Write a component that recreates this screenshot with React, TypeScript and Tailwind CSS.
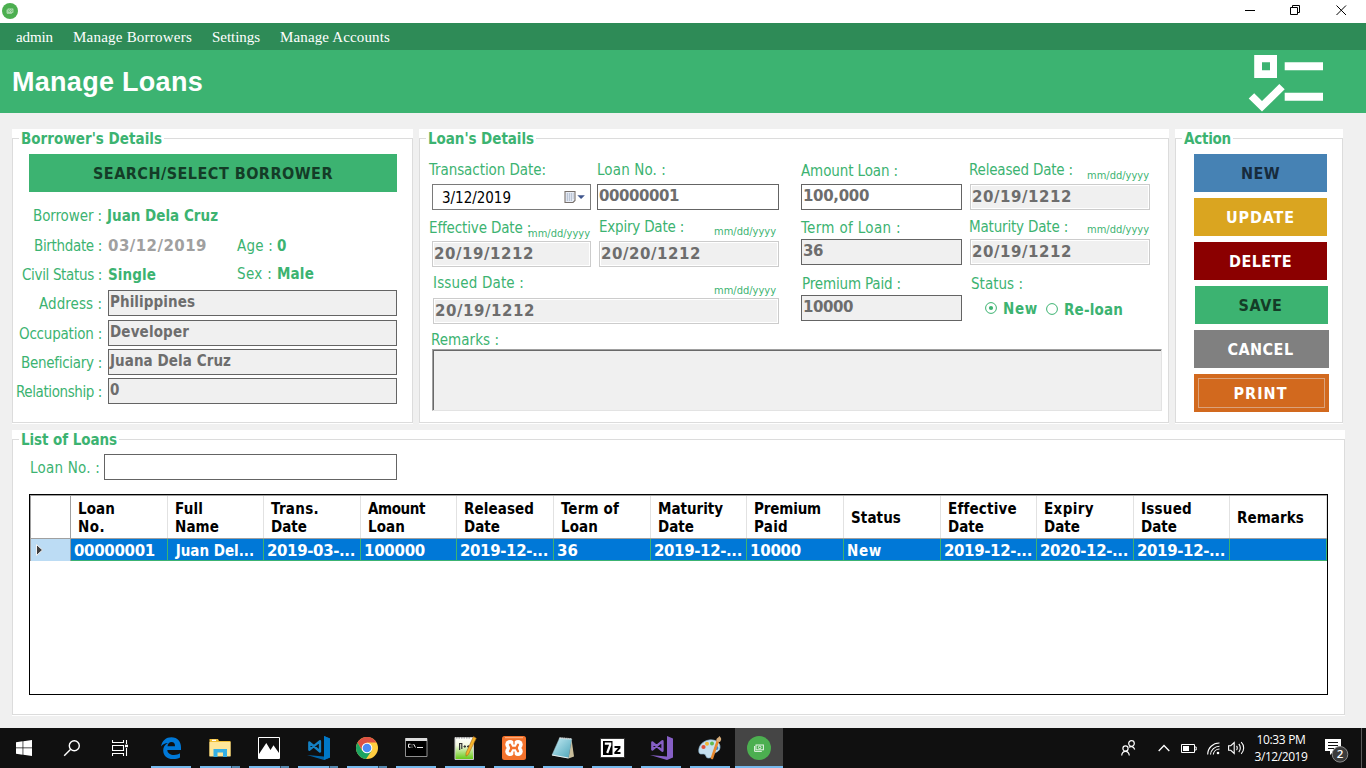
import { useLayoutEffect, useRef, type ReactNode } from "react";

/* Single-line text whose letter spacing is computed so it fills `w` pixels. */
function Fit({ w, box = "w-fit", className = "", children }: { w: number; box?: string; className?: string; children: string }) {
  const ref = useRef<HTMLSpanElement>(null);
  useLayoutEffect(() => {
    const el = ref.current;
    if (!el) return;
    el.style.letterSpacing = "0px";
    const range = document.createRange();
    range.selectNodeContents(el);
    const natural = range.getBoundingClientRect().width;
    el.style.letterSpacing = `${(w + 1 - natural) / children.length}px`;
  }, [w, children]);
  const digits = /^[\d/,.-]{2,}$/.test(children) ? "font-['DejaVu_Sans',sans-serif]" : "";
  return (
    <span ref={ref} className={`block shrink-0 whitespace-pre ${box} ${className}`}>
      <span className={className.includes("plain") ? "" : digits}>{children}</span>
    </span>
  );
}

function Group({ title, tw, className, children }: { title: string; tw: number; className: string; children: ReactNode }) {
  return (
    <section className={`flex shrink-0 flex-col bg-white pt-[9px] pb-px ${className}`}>
      <div className="flex flex-1 flex-col border border-[#dcdcdc]">
        <h2 className="-mt-[9px] ml-[6px] h-[18px] w-fit bg-white pr-[2px] pl-[2px] text-[15px] leading-[19px] font-bold text-[#3cb371]">
          <Fit w={tw}>{title}</Fit>
        </h2>
        {children}
      </div>
    </section>
  );
}

const label = "text-[15px] leading-[20px] text-[#3cb371]";
const strong = "text-[15px] leading-[20px] font-bold text-[#3cb371]";

function Box({ text, w = 0, className = "" }: { text?: string; w?: number; className?: string }) {
  return (
    <div className={`h-[26px] border border-[#646464] pl-px text-[15px] leading-[23px] font-bold text-[#6d6d6d] ${className}`}>
      {text ? <Fit w={w}>{text}</Fit> : null}
    </div>
  );
}

function DateBox({ text, className = "" }: { text: string; className?: string }) {
  return (
    <div className={`h-[26px] border border-[#cccccc] bg-white p-px ${className}`}>
      <div className="h-full bg-[#f0f0f0] text-[15px] leading-[23px] font-bold text-[#6d6d6d]">
        <Fit w={99}>{text}</Fit>
      </div>
    </div>
  );
}

function Caption({ text, w, className, hint }: { text: string; w: number; className: string; hint?: string }) {
  return (
    <div className={`flex items-start justify-between ${className}`}>
      <Fit w={w} box="w-0" className={label}>{text}</Fit>
      {hint ? <Fit w={61} className={`text-[11px] leading-[14px] text-[#3cb371] ${hint}`}>mm/dd/yyyy</Fit> : null}
    </div>
  );
}

function InfoRow({ name, w, className, shift = "", children }: { name: string; w: number; className: string; shift?: string; children: ReactNode }) {
  return (
    <div className={`flex ${className}`}>
      <div className={`flex w-[95px] shrink-0 justify-end pr-[6px] ${shift}`}>
        <Fit w={w} className={label}>{name}</Fit>
      </div>
      {children}
    </div>
  );
}

function CashLogo({ className }: { className: string }) {
  return (
    <svg viewBox="0 0 24 24" className={className}>
      <circle cx="12" cy="12" r="12" fill="#4caf50" />
      <g fill="none" stroke="#e8f5e9" strokeWidth="1">
        <path d="M7.6 10v5.4h7.2" />
        <rect x="9" y="9" width="7.4" height="4.8" />
        <circle cx="12.7" cy="11.4" r="1.3" />
      </g>
    </svg>
  );
}

const columns: [string, number, string, number, string, string, number][] = [
  ["Loan", 36, "No.", 26, "w-[97px]", "00000001", 80],
  ["Full", 27, "Name", 43, "w-[96px]", " Juan Del...", 82],
  ["Trans.", 47, "Date", 35, "w-[97px]", "2019-03-...", 87],
  ["Amount", 56, "Loan", 36, "w-[96px]", "100000", 60],
  ["Released", 69, "Date", 35, "w-[97px]", "2019-12-...", 87],
  ["Term of", 57, "Loan", 36, "w-[97px]", "36", 20],
  ["Maturity", 64, "Date", 35, "w-[96px]", "2019-12-...", 87],
  ["Premium", 66, "Paid", 33, "w-[97px]", "10000", 50],
  ["Status", 49, "", 0, "w-[97px]", "New", 34],
  ["Effective", 67, "Date", 35, "w-[96px]", "2019-12-...", 87],
  ["Expiry", 49, "Date", 35, "w-[97px]", "2020-12-...", 87],
  ["Issued", 50, "Date", 35, "w-[96px]", "2019-12-...", 87],
  ["Remarks", 66, "", 0, "w-[97px]", "", 0],
];

function LoansTable() {
  return (
    <div className="mt-[14px] ml-[16px] h-[201px] w-[1299px] border border-black bg-white">
      <div className="flex h-[44px] border-t border-b border-[#a0a0a0]">
        <div className="w-[41px] shrink-0 border-r border-l border-[#a0a0a0]" />
        {columns.map(([a, aw, b, bw, width], i) => (
          <div key={i} className={`flex shrink-0 flex-col justify-center border-r border-[#e2e2e2] pt-[2px] pl-[7px] text-[15px] leading-[18px] font-bold text-black ${width}`}>
            <Fit w={aw}>{a}</Fit>
            {b ? <Fit w={bw}>{b}</Fit> : null}
          </div>
        ))}
      </div>
      <div className="flex h-[22px]">
        <div className="flex w-[41px] shrink-0 items-center border-r border-l border-[#a0a0a0] bg-[#bcdcf4] pl-[5px]">
          <svg viewBox="0 0 8 12" className="h-[12px] w-[8px]">
            <path d="M0.5 0.5 L6.5 6 L0.5 11.5Z" fill="#404040" stroke="#f4f4f4" strokeWidth="1" />
          </svg>
        </div>
        {columns.map(([, , , , width, text, tw], i) => (
          <div key={i} className={`shrink-0 border-r border-b border-[#3cb371] bg-[#0078d7] pl-[3px] text-[15px] leading-[24px] font-bold text-white ${width}`}>
            {text ? <Fit w={tw}>{text}</Fit> : null}
          </div>
        ))}
      </div>
    </div>
  );
}

function ActionButton({ text, w, className }: { text: string; w: number; className: string }) {
  return (
    <button className={`flex h-[38px] shrink-0 items-center justify-center pt-[2px] text-[16px] leading-[20px] font-bold ${className}`}>
      <Fit w={w}>{text}</Fit>
    </button>
  );
}

function Task({ children, split = false }: { children: ReactNode; split?: boolean }) {
  return (
    <div className="flex h-[40px] w-[49px] shrink-0 flex-col px-[4px] pr-[5px]">
      <div className="flex h-[38px] items-center justify-center pt-[2px]">{children}</div>
      <div className="flex h-[2px] bg-[#76b9ed]">{split ? <div className="ml-auto w-[9px] border-l border-[#2f4a5f] bg-[#5589b0]" /> : null}</div>
    </div>
  );
}

function Taskbar() {
  const ic = "h-[24px] w-[24px]";
  return (
    <footer className="flex h-[40px] w-full shrink-0 bg-[#101010] text-white">
      <div className="flex w-[48px] items-center justify-center">
        <svg viewBox="0 0 16 16" className="h-[16px] w-[16px]" fill="#fff">
          <path d="M0 2.2 6.6 1.3V7.6H0zM7.3 1.2 16 0V7.6H7.3zM0 8.3H6.6V14.7L0 13.8zM7.3 8.3H16V16L7.3 14.8z" />
        </svg>
      </div>
      <div className="flex w-[48px] items-center justify-center">
        <svg viewBox="0 0 18 18" className="h-[18px] w-[18px]" fill="none" stroke="#fff" strokeWidth="1.4">
          <circle cx="11.3" cy="6.7" r="5" />
          <path d="M7.7 10.3 1.2 16.8" />
        </svg>
      </div>
      <div className="flex w-[48px] items-center justify-center">
        <svg viewBox="0 0 17 16" className="h-[16px] w-[17px]" fill="none" stroke="#fff" strokeWidth="1.1">
          <path d="M.5 0V2.5H11.5V0M.5 16V13.5H11.5V16M.5 5.5H11.5V10.5H.5zM14.5 0V4M14.5 8V16" />
          <path d="M13 4.7H16V7.2H13z" fill="#fff" stroke="none" />
        </svg>
      </div>
      <div className="ml-[3px] flex">
        <Task>
          <svg viewBox="0 0 24 24" className={ic}>
            <path d="M2 10.5C3 4.5 7.2 1.2 12.4 1.2 18.8 1.2 22 5.8 22 11.3V14H8.3C8.5 17.5 11.6 19 15 19 17.4 19 19.4 18.3 21 17.3V21.6C19.2 22.6 16.8 23.1 14.1 23.1 8 23.1 4.2 19.6 4.2 14.5 4.2 11.2 6 8.6 9 7.1 6 7.3 3.7 8.5 2 10.5ZM8.5 10.2H16C16 7.4 14.8 6 12.5 6 10.2 6 8.8 7.7 8.5 10.2Z" fill="#0078d7" />
          </svg>
        </Task>
        <Task split>
          <svg viewBox="0 0 24 24" className={ic}>
            <path d="M1.5 3H10l1 2H22.5V20H1.5z" fill="#f0bd35" />
            <path d="M1.5 6H22.5V20.5H1.5z" fill="#ffe699" />
            <path d="M4 3.7H8V5H4z" fill="#fff" />
            <path d="M5.5 21V13H19V21H15V16.5H9.5V21z" fill="#35b0e5" />
          </svg>
        </Task>
        <Task split>
          <svg viewBox="0 0 24 24" className={ic}>
            <path d="M1.5 1.5H22.5V22.5H1.5z" fill="#101010" stroke="#fff" strokeWidth="1" />
            <path d="M2 18 9.3 7 13.5 14 16.5 9.3 22 17V22.5H2z" fill="#fff" />
          </svg>
        </Task>
        <Task split>
          <svg viewBox="0 0 24 24" className={ic}>
            <path d="M18 0 24 2.5V21.5L18 24 1 19 18 20.5z" fill="#0065a9" />
            <path d="M18 0 24 2.5V21.5L18 24z" fill="#0078c8" />
            <path d="M3.3 6.5 14 15.5V5.2L3.3 13.8z" fill="none" stroke="#1481c4" strokeWidth="2.3" strokeLinejoin="round" />
          </svg>
        </Task>
        <Task split>
          <svg viewBox="0 0 24 24" className={ic}>
            <circle cx="12" cy="12" r="11" fill="#ffcd40" />
            <path d="M2.5 6.5A11 11 0 0 1 21.5 6.5H12L7.2 14.5z" fill="#dd5144" />
            <path d="M2.5 6.5A11 11 0 0 0 11 23L16.8 14.6 12 17 7.2 14.7z" fill="#1da462" />
            <circle cx="12" cy="12" r="5.3" fill="#fff" />
            <circle cx="12" cy="12" r="4.3" fill="#4c8bf5" />
          </svg>
        </Task>
        <Task>
          <svg viewBox="0 0 24 24" className={ic}>
            <path d="M1.5 2.5H23V20.5H1.5z" fill="#000" stroke="#8f8f8f" strokeWidth="1" />
            <path d="M1.5 2H23V5H1.5z" fill="#dcdcdc" />
            <path d="M6.5 8.2H4.5V11.3H6.5M8 8.5V9.3M8 10.7V11.5M9.6 8 11.5 11.5M13 11.5H19" fill="none" stroke="#eee" strokeWidth="1" />
          </svg>
        </Task>
        <Task>
          <svg viewBox="0 0 24 24" className={ic}>
            <defs><linearGradient id="npp" x1="0" y1="0" x2="0" y2="1"><stop offset="0" stopColor="#fff" /><stop offset=".35" stopColor="#f4fae0" /><stop offset="1" stopColor="#62c811" /></linearGradient></defs>
            <path d="M2 1.5H20.5V23.5H2z" fill="url(#npp)" stroke="#c8c8c8" />
            <path d="M3 1.8H18" stroke="#999" strokeDasharray="1.5 1" strokeWidth="1.5" />
            <path d="M6.6 14V7.5H8.8V13M10.5 10.5H13M11.8 9.2V11.8M14 10.5H16.5M15.3 9.2V11.8" fill="none" stroke="#333" strokeWidth="1.2" />
            <path d="M20.5 .5 23.3 2.3 15.3 18.5 13 20.2 13 17z" fill="#f6b52b" stroke="#a06218" strokeWidth=".6" />
          </svg>
        </Task>
        <Task>
          <svg viewBox="0 0 24 24" className={ic}>
            <rect x="0" y="0" width="24" height="24" rx="2.5" fill="#f3722c" />
            <path d="M3 1.7H21" stroke="#ffb98c" strokeWidth="1" />
            <g fill="#fff">
              <circle cx="8" cy="8.6" r="4.7" />
              <circle cx="16" cy="8.6" r="4.7" />
              <circle cx="8" cy="15.4" r="4.7" />
              <circle cx="16" cy="15.4" r="4.7" />
              <path d="M9 8.5H15V15.5H9z" />
            </g>
            <path d="M8 8.8 9.3 11.2M16 8.8 14.7 11.2M8 15.2 9.3 12.8M16 15.2 14.7 12.8M9 12H15" stroke="#f3722c" strokeWidth="2.3" strokeLinecap="round" />
            <path d="M12 3V8.6M12 15.4V21" stroke="#f3722c" strokeWidth="1.3" />
          </svg>
        </Task>
        <Task>
          <svg viewBox="0 0 24 24" className={ic}>
            <defs><linearGradient id="pad" x1="0" y1="0" x2="1" y2="1"><stop offset="0" stopColor="#c7edf5" /><stop offset="1" stopColor="#4ba4b9" /></linearGradient></defs>
            <path d="M20.5 3 23 20.5 17.5 22.5z" fill="#c9bd9a" />
            <path d="M8.5 2 20.8 3 17.5 22 1 19z" fill="url(#pad)" stroke="#8aa9b3" strokeWidth=".5" />
            <path d="M8.5 2 20.8 3" stroke="#eee" strokeWidth="1.7" strokeDasharray="1.2 .8" />
            <path d="M1 19 17.5 22" stroke="#e6f0f2" strokeWidth="1.2" />
          </svg>
        </Task>
        <Task>
          <div className="flex h-[18px] w-[23px] items-start justify-center border-[2px] border-white bg-black outline outline-[#333]">
            <svg viewBox="0 0 19 14" className="h-[14px] w-[19px]" fill="none">
              <path d="M9.5 0H19V14H9.5z" fill="#fff" />
              <path d="M1.8 2.7H7.2V4L4.2 12" stroke="#fff" strokeWidth="2.2" />
              <path d="M11.5 6H16.5V7L12.3 11.5V12H17.5" stroke="#000" strokeWidth="1.9" />
            </svg>
          </div>
        </Task>
        <Task>
          <svg viewBox="0 0 24 24" className={ic}>
            <path d="M18 0 24 2.5V21.5L18 24 1 19 18 20.5z" fill="#865fc5" />
            <path d="M3.3 6.5 13.5 14.8V5.2L3.3 13.5z" fill="none" stroke="#865fc5" strokeWidth="2.3" strokeLinejoin="round" />
          </svg>
        </Task>
        <Task>
          <svg viewBox="0 0 24 24" className={ic}>
            <path d="M11 4C17 3 22.5 6.5 22 11.5 21.5 16 17.5 16 15.5 18 14 20 14.5 22 10 22 7.5 22 8.5 18.5 6 18 3.5 17.7 1.2 19 .8 15.5 .3 10 4.5 5 11 4Z" fill="#c6e0f0" stroke="#8eb7d2" strokeWidth=".7" />
            <circle cx="5.5" cy="11" r="2.1" fill="#e2513b" />
            <circle cx="9" cy="7.8" r="2" fill="#f0b835" />
            <circle cx="14" cy="7.5" r="2" fill="#61b94e" />
            <circle cx="18.5" cy="12" r="1.9" fill="#3b86d0" />
            <path d="M20 4.5 14 22" stroke="#e7892f" strokeWidth="2.6" strokeLinecap="round" />
            <path d="M18.7 5.3C17.5 2 20 2.5 21.5 0 22.5 2 24.5 2 22 6z" fill="#d8ad79" />
          </svg>
        </Task>
        <div className="flex w-[48px] shrink-0 flex-col bg-[#454545]">
          <div className="flex h-[38px] items-center justify-center pt-[2px]"><CashLogo className={ic} /></div>
          <div className="h-[2px] bg-[#76b9ed]" />
        </div>
      </div>
      <div className="ml-auto flex items-center">
        <svg viewBox="0 0 15 16" className="mr-[22px] h-[16px] w-[15px]" fill="none" stroke="#fff" strokeWidth="1.2">
          <circle cx="10.5" cy="3.5" r="2.8" />
          <circle cx="4.5" cy="8.5" r="2.6" />
          <path d="M.7 15.5C.9 12.8 2.3 11.3 4.5 11.3S8 12.8 8.3 15.5M8 7.2C9 6.4 12.5 5.7 13.7 9.5" />
        </svg>
        <svg viewBox="0 0 12 8" className="mr-[11px] h-[8px] w-[12px]" fill="none" stroke="#fff" strokeWidth="1.3">
          <path d="M.7 7 6 1.5 11.3 7" />
        </svg>
        <svg viewBox="0 0 16 9" className="mr-[10px] h-[9px] w-[16px]">
          <path d="M.5.5H13.5V8.5H.5zM13.5 3H15.2V6H13.5" fill="none" stroke="#fff" />
          <path d="M2 2H8V7H2z" fill="#fff" />
        </svg>
        <svg viewBox="0 0 14 13" className="mr-[7px] h-[13px] w-[14px]" fill="none" stroke="#fff" strokeWidth="1.1">
          <path d="M.7 12.5A11.5 11.5 0 0 1 12.5 1M3.5 12.5A9 9 0 0 1 12.5 4.2M6.3 12.5A6.3 6.3 0 0 1 12.5 7" />
          <circle cx="11" cy="11" r="1.3" fill="#fff" stroke="none" />
        </svg>
        <svg viewBox="0 0 17 14" className="mr-[9px] h-[14px] w-[17px]" fill="none" stroke="#fff" strokeWidth="1.1">
          <path d="M.6 4.7H2.8L6.2 1.5V12.5L2.8 9.3H.6zM8.5 5C9.5 6 9.5 8 8.5 9M10.8 3C12.8 5 12.8 9 10.8 11M13.2 1.2C16.5 4.5 16.5 9.5 13.2 12.8" />
        </svg>
        <div className="flex w-[54px] flex-col items-center pb-[2px] text-[12px] leading-[17px]">
          <Fit w={48} className="mt-[2px] font-['Open_Sans','Noto_Sans',sans-serif]">10:33 PM</Fit>
          <Fit w={52} className="plain font-['Open_Sans','Noto_Sans',sans-serif]">3/12/2019</Fit>
        </div>
        <svg viewBox="0 0 26 26" className="mt-[4px] ml-[16px] h-[26px] w-[26px]">
          <path d="M1 2H17V14H10L6 18V14H1z" fill="#fff" />
          <path d="M4 5.5H14M4 8.5H14M4 11.5H10" stroke="#101010" strokeWidth="1" />
          <circle cx="16" cy="17.3" r="7.8" fill="#3b3b3b" stroke="#8b8b8b" />
          <text x="16" y="21.4" textAnchor="middle" fill="#fff" fontSize="11.5" fontWeight="600" fontFamily="Open Sans, sans-serif">2</text>
        </svg>
        <div className="ml-[11px] h-[40px] w-[5px] border-l border-[#5a5a5a]" />
      </div>
    </footer>
  );
}

function BorrowerPanel() {
  return (
    <Group title="Borrower's Details" tw={140} className="w-[401px]">
      <ActionButton text="SEARCH/SELECT BORROWER" w={239} className="mt-[6px] ml-[16px] w-[368px] bg-[#3cb371] text-[#143c27]" />
      <InfoRow name="Borrower :" w={68} className="mt-[14px]">
        <Fit w={110} className={`-ml-px ${strong}`}>Juan Dela Cruz</Fit>
      </InfoRow>
      <InfoRow name="Birthdate :" w={67} className="mt-[10px]">
        <Fit w={98} box="w-[129px]" className="text-[15px] leading-[20px] font-bold text-[#a0a0a0]">03/12/2019</Fit>
        <Fit w={35} box="w-[40px]" className={label}>Age :</Fit>
        <Fit w={10} className={strong}>0</Fit>
      </InfoRow>
      <InfoRow name="Civil Status :" w={79} className="mt-[9px]">
        <Fit w={47} box="w-[129px]" className={strong}>Single</Fit>
        <Fit w={34} box="w-[40px]" className={`-mt-px ${label}`}>Sex :</Fit>
        <Fit w={36} className={`-mt-px ${strong}`}>Male</Fit>
      </InfoRow>
      <InfoRow name="Address :" w={62} className="mt-[5px] items-center" shift="pt-[2px]">
        <Box text="Philippines" w={84} className="w-[289px] bg-[#f0f0f0]" />
      </InfoRow>
      <InfoRow name="Occupation :" w={82} className="mt-[4px] items-center" shift="pt-[2px]">
        <Box text="Developer" w={78} className="w-[289px] bg-[#f0f0f0]" />
      </InfoRow>
      <InfoRow name="Beneficiary :" w={80} className="mt-[3px] items-center" shift="pt-[2px]">
        <Box text="Juana Dela Cruz" w={120} className="w-[289px] bg-[#f0f0f0]" />
      </InfoRow>
      <InfoRow name="Relationship :" w={85} className="mt-[3px] items-center" shift="pt-[2px]">
        <Box text="0" w={10} className="w-[289px] bg-[#f0f0f0]" />
      </InfoRow>
    </Group>
  );
}

function LoanPanel() {
  return (
    <Group title="Loan's Details" tw={105} className="ml-[6px] w-[750px]">
      <div className="mt-[12px] ml-[12px] flex h-[170px]">
        <div className="flex w-[347px] flex-col">
          <div className="flex gap-[6px]">
            <div className="w-[159px]">
              <Caption text="Transaction Date:" w={116} className="-ml-[3px] h-[24px]" />
              <div className="flex h-[26px] items-center border border-[#7a7a7a] bg-white pl-[9px] text-black">
                <Fit w={68} className="plain mt-[2px] text-[15px] leading-[20px]">3/12/2019</Fit>
                <svg viewBox="0 0 22 14" className="mr-[4px] ml-auto h-[14px] w-[22px]">
                  <path d="M1 1.5H11V10.5L9 12.5H1z" fill="#e8edf5" stroke="#77706c" strokeWidth="1.1" />
                  <path d="M2.8 4H9.6M2.8 6H9.6M2.8 8H9.6M2.8 10H8" stroke="#8e9db5" strokeWidth="1" strokeDasharray="1.2 .8" />
                  <path d="M13.3 5.2H20.9L17.1 9z" fill="#40568d" />
                </svg>
              </div>
            </div>
            <div className="w-[182px]">
              <Caption text="Loan No. :" w={68} className="h-[24px]" />
              <Box text="00000001" w={79} className="bg-white" />
            </div>
          </div>
          <div className="flex gap-[8px]">
            <div className="w-[159px]">
              <Caption text="Effective Date :" w={101} className="-ml-[3px] h-[31px] pt-[8px] pr-px" hint="mt-[9px]" />
              <DateBox text="20/19/1212" />
            </div>
            <div className="w-[180px]">
              <Caption text="Expiry Date :" w={84} className="h-[31px] pt-[7px] pr-[3px]" hint="mt-[8px]" />
              <DateBox text="20/20/1212" />
            </div>
          </div>
          <Caption text="Issued Date :" w={90} className="ml-px h-[31px] pt-[6px] pr-[3px]" hint="mt-[11px]" />
          <DateBox text="20/19/1212" className="ml-px" />
        </div>
        <div className="ml-[22px] w-[161px]">
          <Caption text="Amount Loan :" w={96} className="h-[24px] pt-px" />
          <Box text="100,000" w={65} className="bg-white" />
          <Caption text="Term of Loan :" w={99} className="h-[29px] pt-[8px]" />
          <Box text="36" w={19} className="bg-[#f0f0f0]" />
          <Caption text="Premium Paid :" w={98} className="ml-px h-[30px] pt-[9px]" />
          <Box text="10000" w={49} className="bg-[#f0f0f0]" />
        </div>
        <div className="ml-[8px] w-[180px]">
          <Caption text="Released Date :" w={103} className="-ml-px h-[24px] pr-px" hint="mt-[9px]" />
          <DateBox text="20/19/1212" />
          <Caption text="Maturity Date :" w={98} className="-ml-px h-[29px] pt-[7px] pr-px" hint="mt-[6px]" />
          <DateBox text="20/19/1212" />
          <Caption text="Status :" w={51} className="ml-px h-[33px] pt-[9px]" />
          <div className="flex items-start pl-[15px]">
            <svg viewBox="0 0 12 12" className="mt-[4px] h-[12px] w-[12px]">
              <circle cx="6" cy="6" r="5.4" fill="#fff" stroke="#3cb371" />
              <circle cx="6" cy="6" r="2.1" fill="#3cb371" />
            </svg>
            <Fit w={34} className={`mt-px ml-[6px] ${strong}`}>New</Fit>
            <svg viewBox="0 0 12 12" className="mt-[5px] ml-[8px] h-[12px] w-[12px]">
              <circle cx="6" cy="6" r="5.4" fill="#fff" stroke="#3cb371" />
            </svg>
            <Fit w={58} className={`mt-[2px] ml-[6px] ${strong}`}>Re-loan</Fit>
          </div>
        </div>
      </div>
      <Fit w={67} className={`ml-[11px] ${label}`}>Remarks :</Fit>
      <div className="-mt-px ml-[12px] h-[62px] w-[730px] border-t border-r border-b border-l border-[#a0a0a0] border-r-[#e3e3e3] border-b-[#e3e3e3]">
        <div className="h-full w-full border-t border-l border-[#696969] bg-[#f0f0f0]" />
      </div>
    </Group>
  );
}

export default function App() {
  return (
    <div className="flex h-[768px] w-[1366px] flex-col overflow-hidden bg-[#f0f0f0] font-['DejaVu_Sans_Condensed','DejaVu_Sans',sans-serif]">
      <header className="flex h-[23px] shrink-0 items-start bg-white">
        <CashLogo className="mt-[3px] ml-[2px] h-[16px] w-[16px]" />
        <svg viewBox="0 0 102 12" className="mt-[4px] mr-[19px] ml-auto h-[12px] w-[102px]" fill="none" stroke="#000" strokeWidth="1">
          <path d="M0 6.5H10" />
          <path d="M45.5 3.5H52.5V10.5H45.5zM47.5 3.5V1.5H54.5V8.5H52.5" />
          <path d="M91.5 1.5 101 11M101 1.5 91.5 11" />
        </svg>
      </header>
      <nav className="flex h-[27px] shrink-0 bg-[#2e8b57] pl-[16px] font-['Liberation_Serif',serif] text-[15px] leading-[28px] text-white">
        <Fit w={36} box="w-[57px]">admin</Fit>
        <Fit w={118} box="w-[139px]">Manage Borrowers</Fit>
        <Fit w={47} box="w-[68px]">Settings</Fit>
        <Fit w={109}>Manage Accounts</Fit>
      </nav>
      <div className="flex h-[63px] shrink-0 justify-between bg-[#3cb371] pl-[12px] text-white">
        <h1 className="font-['Liberation_Sans',sans-serif] text-[27px] leading-[65px] font-bold">
          <Fit w={190}>Manage Loans</Fit>
        </h1>
        <svg viewBox="1248 50 76 63" className="mr-[42px] h-[63px] w-[76px]" fill="#fff">
          <path d="M1254.2 55H1277V78H1254.2zM1262 62.3V70.3H1270V62.3z" fillRule="evenodd" />
          <path d="M1284.7 62.2H1323V70.2H1284.7zM1284.7 92.8H1323V100.8H1284.7z" />
          <path d="M1248.7 98.5 1254.2 93.2 1262 101 1279.3 84 1284.7 89.2 1262 111.5z" />
        </svg>
      </div>
      <main className="flex flex-1 flex-col pt-[16px] pl-[12px]">
        <div className="flex h-[295px]">
          <BorrowerPanel />
          <LoanPanel />
          <Group title="Action" tw={46} className="ml-[6px] w-[168px]">
            <div className="mt-[6px] ml-[18px] flex flex-col gap-[6px]">
              <ActionButton text="NEW" w={38} className="w-[133px] bg-[#4682b4] text-[#172b3c]" />
              <ActionButton text="UPDATE" w={68} className="w-[133px] bg-[#daa520] text-white" />
              <ActionButton text="DELETE" w={62} className="w-[133px] bg-[#8b0000] text-white" />
              <ActionButton text="SAVE" w={43} className="ml-px w-[133px] bg-[#3cb371] pr-[2px] text-[#143c27]" />
              <ActionButton text="CANCEL" w={65} className="w-[135px] bg-[#808080] pr-[2px] text-white" />
              <div className="w-[135px] bg-[#d2691e] p-[4px]">
                <div className="flex h-[30px] items-center justify-center border border-[#dba27a] pt-[2px] pr-[2px] text-[16px] font-bold text-white">
                  <Fit w={53}>PRINT</Fit>
                </div>
              </div>
            </div>
          </Group>
        </div>
        <Group title="List of Loans" tw={95} className="mt-[6px] h-[286px] w-[1333px]">
          <div className="mt-[5px] ml-[17px] flex">
            <Fit w={69} box="w-[74px]" className={`mt-[4px] ${label}`}>Loan No. :</Fit>
            <Box className="w-[293px] bg-white" />
          </div>
          <LoansTable />
        </Group>
      </main>
      <Taskbar />
    </div>
  );
}
